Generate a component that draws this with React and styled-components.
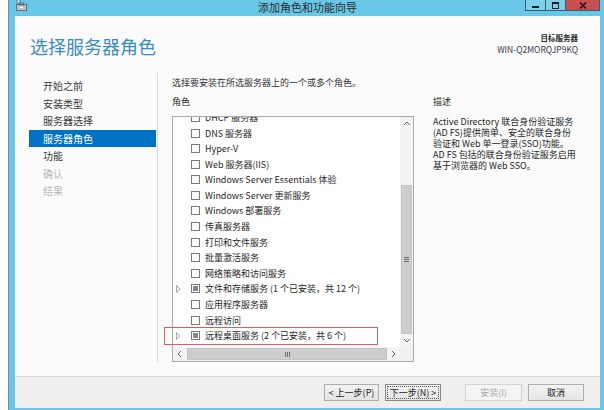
import React from 'react';
import styled, { createGlobalStyle } from 'styled-components';

const GlobalStyle = createGlobalStyle`
  html, body { margin: 0; padding: 0; background: #ffffff; }
  body {
    width: 604px; height: 410px; overflow: hidden;
    font-family: "Noto Sans CJK SC", "Noto Sans", sans-serif;
  }
  * { box-sizing: border-box; }
`;

const Window = styled.div`
  margin-left: 8px;
  width: 596px;
  height: 410px;
  border-left: 1px solid #7d8c93;
  background: #68c6e7;
  padding: 0 4px 2px 6px;
  display: flex;
  flex-direction: column;
`;

const TitleBar = styled.div`
  height: 16px;
  display: grid;
  grid-template-columns: 1fr auto 1fr;
  align-items: start;
`;

const AppIcon = styled.svg`
  justify-self: start;
  margin-left: 1px;
  display: block;
`;

const TitleText = styled.div`
  font-size: 11px;
  line-height: 14px;
  color: #2b2b2b;
  white-space: nowrap;
`;

const Controls = styled.div`
  justify-self: end;
  display: flex;
`;

const CtrlButton = styled.div`
  width: ${(p) => p.$w}px;
  height: 11px;
  margin-left: -1px;
  border: 1px solid #2f5e70;
  border-top: none;
  background: ${(p) => (p.$close ? '#c75050' : '#7fcfeb')};
  display: flex;
  align-items: center;
  justify-content: center;
`;

const Panel = styled.div`
  flex: 1;
  background: #fbfbfb;
  display: flex;
  flex-direction: column;
`;

const Header = styled.div`
  height: 54px;
  display: flex;
  justify-content: space-between;
  align-items: flex-start;
  padding: 16px 22px 0 15px;
`;

const PageTitle = styled.h1`
  margin: 2.5px 0 0;
  font-size: 18px;
  line-height: 22px;
  font-weight: 400;
  color: #3b8dbd;
`;

const Target = styled.div`
  text-align: right;
  color: #2a2a2a;
`;

const TargetLabel = styled.div`
  font-size: 7.5px;
  font-weight: 700;
  line-height: 11px;
`;

const TargetName = styled.div`
  font-size: 8.5px;
  line-height: 12px;
  color: #3a3a4a;
`;

const Columns = styled.div`
  flex: 1;
  display: flex;
`;

const Nav = styled.nav`
  width: 142px;
  padding-top: 7px;
  display: flex;
  flex-direction: column;
`;

const NavItem = styled.div`
  height: 17.5px;
  line-height: 17.5px;
  margin-left: 14px;
  width: 127px;
  padding-left: 14px;
  font-size: 10px;
  white-space: nowrap;
  color: ${(p) => (p.$active ? '#ffffff' : p.$disabled ? '#b9b9b9' : '#3a3a3a')};
  background: ${(p) => (p.$active ? '#0072c6' : 'transparent')};
`;

const Divider = styled.div`
  width: 1px;
  background: #d6d6d6;
  margin: 3px 0 14px;
`;

const Main = styled.div`
  flex: 1;
  padding: 7px 0 0 14px;
`;

const Intro = styled.div`
  font-size: 9px;
  line-height: 12px;
  color: #333;
`;

const SplitGrid = styled.div`
  margin-top: 7px;
  display: grid;
  grid-template-columns: 242px 1fr;
  column-gap: 19px;
`;

const SectionLabel = styled.div`
  font-size: 9px;
  line-height: 12px;
  color: #262626;
  margin-bottom: 8px;
`;

const ListBox = styled.div`
  position: relative;
  height: 246px;
  border: 1px solid #a9a9a9;
  background: #ffffff;
  display: grid;
  grid-template-columns: 1fr 13px;
  grid-template-rows: 1fr 14px;
`;

const Viewport = styled.div`
  overflow: hidden;
`;

const RowStack = styled.div`
  margin-top: -7.4px;
`;

const Row = styled.div`
  height: 15.6px;
  display: flex;
  align-items: center;
  font-size: 9px;
  color: #262626;
  white-space: nowrap;
`;

const Expander = styled.div`
  width: 18px;
  padding-left: 3px;
  display: flex;
  align-items: center;
`;

const Check = styled.span`
  position: relative;
  width: 9px;
  height: 9px;
  border: 1px solid #7a7a7a;
  background: #fff;
  margin-right: 5px;
  flex: none;
  &::after {
    content: '';
    position: absolute;
    inset: 1px;
    background: ${(p) => (p.$partial ? '#858585' : 'transparent')};
  }
`;

const VScroll = styled.div`
  background: #f3f3f3;
  display: flex;
  flex-direction: column;
`;

const HScroll = styled.div`
  background: #f3f3f3;
  display: flex;
`;

const ArrowBtn = styled.div`
  flex: none;
  width: 13px;
  height: ${(p) => (p.$h ? p.$h : 13)}px;
  display: flex;
  align-items: center;
  justify-content: center;
`;

const VTrack = styled.div`
  flex: 1;
  display: flex;
  padding-top: 55px;
`;

const HTrack = styled.div`
  flex: 1;
  display: flex;
  padding: 1px 0 1px 1px;
`;

const Thumb = styled.div`
  flex: 1;
  background: #cdcdcd;
  border: 1px solid #c3c3c3;
  margin: ${(p) => (p.$vertical ? '0 1px' : '0')};
  display: flex;
  align-items: center;
  justify-content: center;
`;

const Corner = styled.div`
  background: #f0f0f0;
`;

const Annotation = styled.div`
  position: absolute;
  left: -9px;
  top: 210px;
  width: 214px;
  height: 18px;
  border: 1px solid #e5585c;
  pointer-events: none;
`;

const DescText = styled.div`
  font-size: 9px;
  line-height: 11px;
  color: #262626;
  white-space: nowrap;
  margin-top: 1px;
`;

const Footer = styled.div`
  height: 32px;
  border-top: 1px solid #d9d9d9;
  background: #eeeeee;
  display: flex;
  justify-content: flex-end;
  align-items: center;
  padding-right: 16px;
`;

const Button = styled.div`
  position: relative;
  width: ${(p) => p.$w}px;
  height: 17px;
  margin-left: ${(p) => p.$gap}px;
  font-size: 9px;
  line-height: 15px;
  text-align: center;
  white-space: nowrap;
  border: 1px solid ${(p) => (p.$disabled ? '#d3d3d3' : p.$focus ? '#8a8a8a' : '#adadad')};
  background: ${(p) => (p.$disabled ? '#f4f4f4' : 'linear-gradient(#f3f3f3, #e4e4e4)')};
  color: ${(p) => (p.$disabled ? '#a9a9a9' : '#222')};
  &::after {
    content: '';
    position: absolute;
    inset: 1px;
    border: ${(p) => (p.$focus ? '1px dotted #555' : 'none')};
  }
`;

const Chevron = ({ dir }) => {
  const pts = {
    up: '1,5 4,2 7,5',
    down: '1,2 4,5 7,2',
    left: '5,1 2,4 5,7',
    right: '2,1 5,4 2,7',
  }[dir];
  const vertical = dir === 'up' || dir === 'down';
  return (
    <svg width={vertical ? 8 : 7} height={vertical ? 7 : 8} viewBox={vertical ? '0 0 8 7' : '0 0 7 8'}>
      <polyline points={pts} fill="none" stroke="#606060" strokeWidth="1" />
    </svg>
  );
};

const Grip = ({ vertical }) =>
  vertical ? (
    <svg width="5" height="5" viewBox="0 0 5 5">
      <rect x="0" y="0" width="5" height="1" fill="#6b6b6b" />
      <rect x="0" y="2" width="5" height="1" fill="#6b6b6b" />
      <rect x="0" y="4" width="5" height="1" fill="#6b6b6b" />
    </svg>
  ) : (
    <svg width="5" height="5" viewBox="0 0 5 5">
      <rect x="0" y="0" width="1" height="5" fill="#6b6b6b" />
      <rect x="2" y="0" width="1" height="5" fill="#6b6b6b" />
      <rect x="4" y="0" width="1" height="5" fill="#6b6b6b" />
    </svg>
  );

const Triangle = () => (
  <svg width="5" height="8" viewBox="0 0 5 8">
    <path d="M0.5 0.5 L4 4 L0.5 7.5 Z" fill="none" stroke="#a8a8a8" strokeWidth="1" />
  </svg>
);

const navItems = [
  { label: '开始之前' },
  { label: '安装类型' },
  { label: '服务器选择' },
  { label: '服务器角色', active: true },
  { label: '功能' },
  { label: '确认', disabled: true },
  { label: '结果', disabled: true },
];

const roles = [
  { label: 'DHCP 服务器' },
  { label: 'DNS 服务器' },
  { label: 'Hyper-V' },
  { label: 'Web 服务器(IIS)' },
  { label: 'Windows Server Essentials 体验' },
  { label: 'Windows Server 更新服务' },
  { label: 'Windows 部署服务' },
  { label: '传真服务器' },
  { label: '打印和文件服务' },
  { label: '批量激活服务' },
  { label: '网络策略和访问服务' },
  { label: '文件和存储服务 (1 个已安装，共 12 个)', expandable: true, partial: true },
  { label: '应用程序服务器' },
  { label: '远程访问' },
  { label: '远程桌面服务 (2 个已安装，共 6 个)', expandable: true, partial: true },
];

export default function App() {
  return (
    <>
      <GlobalStyle />
      <Window>
        <TitleBar>
          <AppIcon width="11" height="11" viewBox="0 0 11 11">
            <rect x="1" y="0" width="3" height="3" fill="#ffffff" stroke="#2d6f8f" strokeWidth="0.8" />
            <rect x="0.5" y="4.5" width="10" height="6" fill="#b9c3c8" stroke="#5f7078" strokeWidth="1" />
            <rect x="3.5" y="3" width="4" height="2" fill="none" stroke="#5f7078" strokeWidth="1" />
            <rect x="4" y="6.5" width="3" height="1.5" fill="#ffffff" />
          </AppIcon>
          <TitleText>添加角色和功能向导</TitleText>
          <Controls>
            <CtrlButton $w={21}>
              <svg width="7" height="7" viewBox="0 0 7 7">
                <rect x="0" y="4" width="7" height="2" fill="#1a1a1a" />
              </svg>
            </CtrlButton>
            <CtrlButton $w={21}>
              <svg width="7" height="7" viewBox="0 0 7 7">
                <rect x="0.5" y="0.5" width="6" height="6" fill="none" stroke="#1a1a1a" strokeWidth="1" />
                <rect x="0" y="0" width="7" height="2" fill="#1a1a1a" />
              </svg>
            </CtrlButton>
            <CtrlButton $w={35} $close>
              <svg width="8" height="7" viewBox="0 0 8 7">
                <path d="M1 0.5 L7 6.5 M7 0.5 L1 6.5" stroke="#2a1414" strokeWidth="1.6" />
              </svg>
            </CtrlButton>
          </Controls>
        </TitleBar>

        <Panel>
          <Header>
            <PageTitle>选择服务器角色</PageTitle>
            <Target>
              <TargetLabel>目标服务器</TargetLabel>
              <TargetName>WIN-Q2MORQJP9KQ</TargetName>
            </Target>
          </Header>

          <Columns>
            <Nav>
              {navItems.map((n) => (
                <NavItem key={n.label} $active={n.active} $disabled={n.disabled}>
                  {n.label}
                </NavItem>
              ))}
            </Nav>
            <Divider />
            <Main>
              <Intro>选择要安装在所选服务器上的一个或多个角色。</Intro>
              <SplitGrid>
                <div>
                  <SectionLabel>角色</SectionLabel>
                  <ListBox>
                    <Viewport>
                      <RowStack>
                        {roles.map((r) => (
                          <Row key={r.label}>
                            <Expander>{r.expandable && <Triangle />}</Expander>
                            <Check $partial={r.partial} />
                            <span>{r.label}</span>
                          </Row>
                        ))}
                      </RowStack>
                    </Viewport>
                    <VScroll>
                      <ArrowBtn><Chevron dir="up" /></ArrowBtn>
                      <VTrack>
                        <Thumb $vertical><Grip vertical /></Thumb>
                      </VTrack>
                      <ArrowBtn><Chevron dir="down" /></ArrowBtn>
                    </VScroll>
                    <HScroll>
                      <ArrowBtn $h={14}><Chevron dir="left" /></ArrowBtn>
                      <HTrack>
                        <Thumb><Grip /></Thumb>
                      </HTrack>
                      <ArrowBtn $h={14}><Chevron dir="right" /></ArrowBtn>
                    </HScroll>
                    <Corner />
                    <Annotation />
                  </ListBox>
                </div>
                <div>
                  <SectionLabel>描述</SectionLabel>
                  <DescText>
                    Active Directory 联合身份验证服务<br />
                    (AD FS)提供简单、安全的联合身份<br />
                    验证和 Web 单一登录(SSO)功能。<br />
                    AD FS 包括的联合身份验证服务启用<br />
                    基于浏览器的 Web SSO。
                  </DescText>
                </div>
              </SplitGrid>
            </Main>
          </Columns>

          <Footer>
            <Button $w={55} $gap={0}>&lt; 上一步(P)</Button>
            <Button $w={56} $gap={6} $focus>下一步(N) &gt;</Button>
            <Button $w={57} $gap={24} $disabled>安装(I)</Button>
            <Button $w={56} $gap={6}>取消</Button>
          </Footer>
        </Panel>
      </Window>
    </>
  );
}
